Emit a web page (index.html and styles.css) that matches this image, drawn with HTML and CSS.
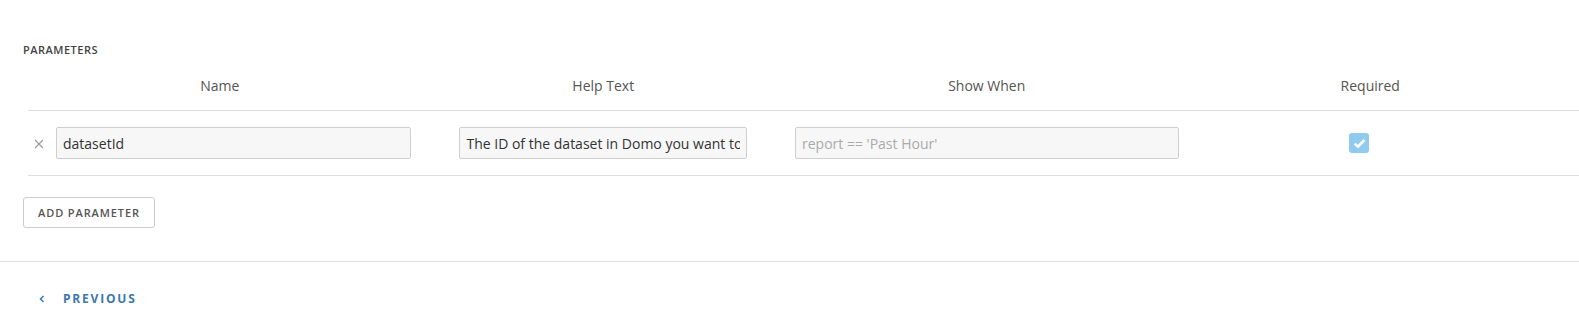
FILE: index.html
```html
<!DOCTYPE html>
<html lang="en">

<head>
    <meta charset="UTF-8">
    <meta name="viewport" content="width=device-width, initial-scale=1.0">
    <title>Parameters</title>
    <link rel="stylesheet" href="styles.css">
</head>

<body>
    <div class="params-section">
        <div class="section-title">PARAMETERS</div>
        <div class="param-table">
            <div class="param-head">
                <div class="head-cell">Name</div>
                <div class="head-cell">Help Text</div>
                <div class="head-cell">Show When</div>
                <div class="head-cell">Required</div>
            </div>
            <div class="param-row">
                <div class="cell name-cell">
                    <span class="remove-btn">
                        <svg width="10" height="10" viewBox="0 0 10 10"><path d="M1 1L9 9M9 1L1 9" stroke="#9a9a9a" stroke-width="1.1" fill="none"/></svg>
                    </span>
                    <input class="text-input" type="text" value="datasetId">
                </div>
                <div class="cell help-cell">
                    <input class="text-input" type="text" value="The ID of the dataset in Domo you want to update">
                </div>
                <div class="cell">
                    <input class="text-input" type="text" placeholder="report == 'Past Hour'">
                </div>
                <div class="cell check-cell">
                    <span class="checkbox">
                        <svg width="13" height="11" viewBox="0 0 13 11"><path d="M1.6 5.6L5 8.6L11.4 2" stroke="#fff" stroke-width="2.6" fill="none"/></svg>
                    </span>
                </div>
            </div>
        </div>
        <button class="add-btn" type="button">ADD PARAMETER</button>
    </div>

    <div class="footer">
        <a class="prev-link" href="#">
            <svg width="6" height="8" viewBox="0 0 6 8"><path d="M4.5 1L1.5 4L4.5 7" stroke="#3b78ad" stroke-width="1.5" fill="none"/></svg>
            <span>PREVIOUS</span>
        </a>
    </div>
</body>

</html>
```

FILE: styles.css
```css
body {
    margin: 0;
    padding: 0;
    font-family: "Open Sans", sans-serif;
    color: #555;
    background-color: white;
}

.params-section {
    padding: 42px 0 33px 23px;
    border-bottom: 1px solid #dedede;
}

.section-title {
    font-size: 11px;
    line-height: 15px;
    font-weight: 600;
    letter-spacing: 0.5px;
    color: #444;
}

.param-table {
    margin-left: 5px;
    margin-top: 19px;
}

.param-head,
.param-row {
    display: grid;
    grid-template-columns: repeat(4, 383.5px);
    border-bottom: 1px solid #dedede;
}

.param-head {
    padding-bottom: 15px;
}

.head-cell {
    text-align: center;
    font-size: 14px;
    line-height: 19px;
    color: #555;
}

.param-row {
    height: 64px;
    align-items: center;
}

.cell {
    display: flex;
    align-items: center;
}

.name-cell {
    padding-left: 6px;
    padding-right: 1px;
}

.remove-btn {
    display: flex;
    width: 10px;
    margin-right: 12px;
    margin-top: 2px;
}

.help-cell {
    justify-content: center;
}

.help-cell .text-input {
    width: 75%;
    flex: none;
}

.text-input {
    flex: 1;
    min-width: 0;
    height: 32px;
    box-sizing: border-box;
    padding: 0 6px;
    border: 1px solid #cfcfcf;
    border-radius: 2px;
    background-color: #f7f7f7;
    font-family: "Open Sans", sans-serif;
    font-size: 14px;
    color: #333;
}

.text-input::placeholder {
    color: #aaa;
}

.check-cell {
    justify-content: center;
}

.checkbox {
    display: flex;
    align-items: center;
    justify-content: center;
    width: 20px;
    height: 20px;
    margin-right: 22px;
    border-radius: 3px;
    background-color: #90caef;
}

.add-btn {
    margin-top: 21px;
    height: 31px;
    padding: 0 14px;
    border: 1px solid #cccccc;
    border-radius: 3px;
    background-color: white;
    font-family: "Open Sans", sans-serif;
    font-size: 11px;
    font-weight: 600;
    letter-spacing: 0.9px;
    color: #555;
}

.footer {
    padding: 29px 0 0 39px;
}

.prev-link {
    display: flex;
    align-items: center;
    gap: 18px;
    text-decoration: none;
    color: #3b78ad;
    font-size: 12px;
    line-height: 16px;
    font-weight: 700;
    letter-spacing: 1.8px;
}
```
